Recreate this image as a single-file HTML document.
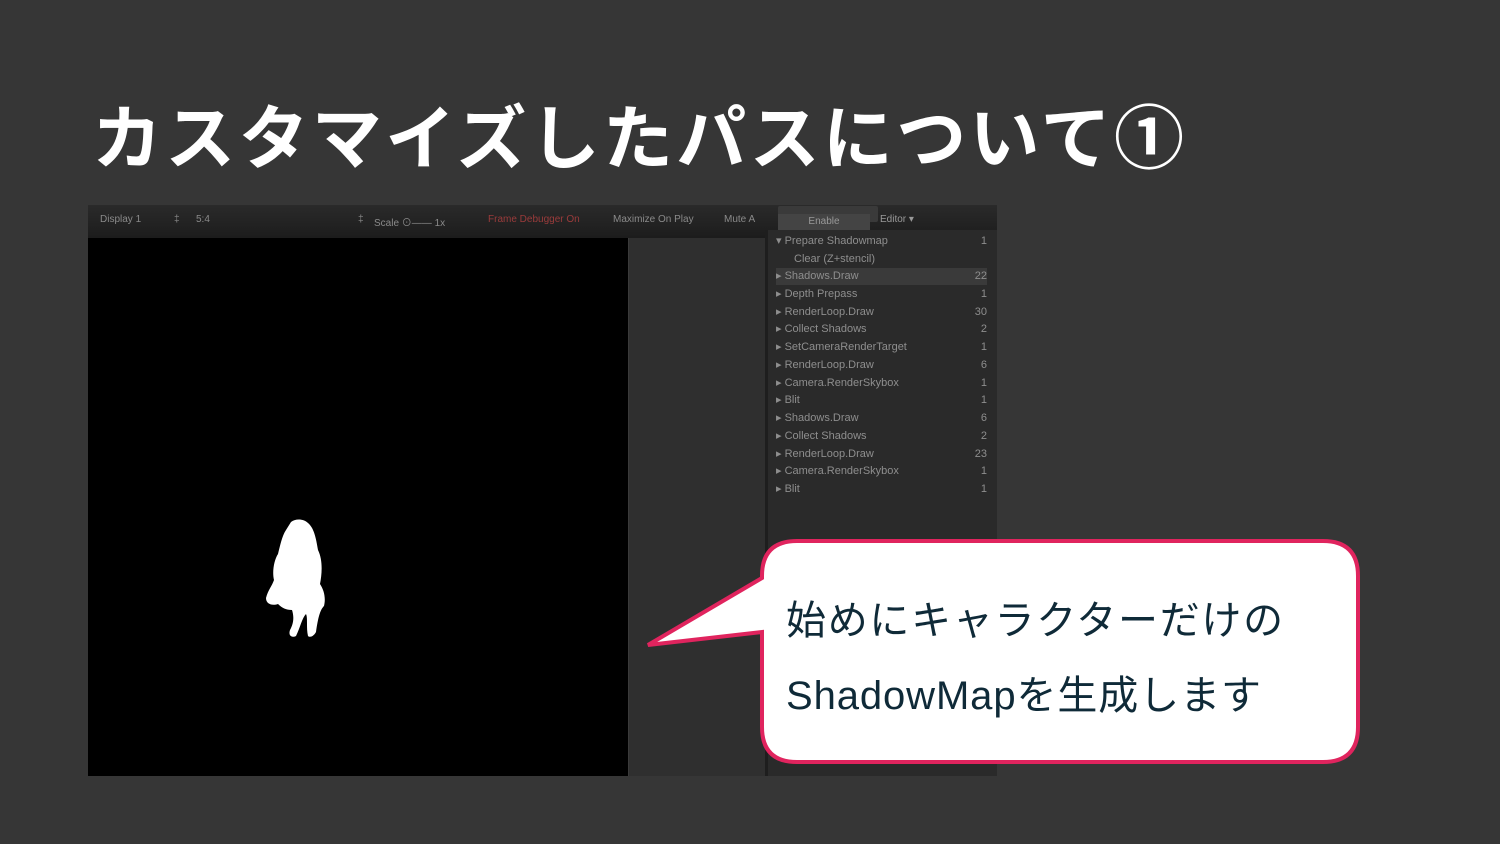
<!DOCTYPE html>
<html><head><meta charset="utf-8"><style>
html,body{margin:0;padding:0;}
body{width:1500px;height:844px;background:#363636;position:relative;overflow:hidden;font-family:"Liberation Sans","Noto Sans CJK JP",sans-serif;}
.title{position:absolute;left:92px;top:86px;font-family:"Noto Sans CJK JP",sans-serif;font-weight:700;font-size:70px;letter-spacing:3.3px;color:#fff;white-space:nowrap;line-height:96px;}
.shot{position:absolute;left:88px;top:205px;width:909px;height:571px;background:#2e2e2e;overflow:hidden;}
.tb{position:absolute;left:0;top:0;width:909px;height:33px;background:linear-gradient(#2a2a2a,#222 60%,#1c1c1c);}
.tb span{position:absolute;top:9px;font-size:10px;color:#8a8a8a;white-space:nowrap;}
.game{position:absolute;left:0;top:33px;width:540px;height:538px;background:#000;}
.mid{position:absolute;left:540px;top:33px;width:137px;height:538px;background:#2f2f2f;border-left:1px solid #3a3a3a;}
.panel{position:absolute;left:677px;top:25px;width:229px;height:546px;background:#2a2a2a;border-left:3px solid #1e1e1e;}
.row{position:absolute;left:8px;width:211px;font-size:11px;color:#8e8e8e;white-space:nowrap;height:17px;line-height:17px;}
.row b{position:absolute;right:0;font-weight:normal;}
.bubble{position:absolute;left:0;top:0;}
.txt{position:absolute;left:786px;font-size:40px;color:#0f2a38;white-space:nowrap;font-family:"Liberation Sans","Noto Sans CJK JP",sans-serif;}
</style></head><body>
<div class="title">カスタマイズしたパスについて①</div>
<div class="shot">
 <div class="tb">
  <span style="left:12px">Display 1</span><span style="left:86px">‡</span><span style="left:108px">5:4</span>
  <span style="left:270px">‡</span><span style="left:286px">Scale ⊙—— 1x</span>
  <span style="left:400px;color:#9a3b3b">Frame Debugger On</span>
  <span style="left:525px">Maximize On Play</span><span style="left:636px">Mute A</span>
  <span style="left:690px;top:1px;width:100px;height:16px;background:#3a3a3a;border-radius:2px"></span>
  <span style="left:690px;top:9px;width:92px;height:16px;background:#444;text-align:center;line-height:16px;color:#999">Enable</span>
  <span style="left:792px;top:9px;color:#999">Editor ▾</span>
 </div>
 <div class="game">
  <svg width="540" height="538" style="position:absolute;left:0;top:0">
   <path fill="#fff" d="M203,284 C208,280 216,281 220,285 C226,290 228,300 230,312 C235,322 234,336 232,346 C236,352 238,360 236,368 C232,372 230,380 228,394 C226,398 222,400 220,398 C218,390 220,380 218,376 C214,380 212,390 208,398 C204,400 200,398 202,392 C206,385 206,378 204,372 C198,372 194,370 190,366 C184,368 178,366 178,360 C180,352 184,348 186,342 C184,334 186,322 190,316 C192,308 194,298 198,292 Z"/>
  </svg>
 </div>
 <div class="mid"></div>
 <div class="panel">
  <div class="row" style="top:3px">▾ Prepare Shadowmap<b>1</b></div>
  <div class="row" style="top:21px;left:26px;width:180px">Clear (Z+stencil)</div>
  <div class="row" style="top:38px;background:#3a3a3a">▸ Shadows.Draw<b>22</b></div>
  <div class="row" style="top:56px">▸ Depth Prepass<b>1</b></div>
  <div class="row" style="top:74px">▸ RenderLoop.Draw<b>30</b></div>
  <div class="row" style="top:91px">▸ Collect Shadows<b>2</b></div>
  <div class="row" style="top:109px">▸ SetCameraRenderTarget<b>1</b></div>
  <div class="row" style="top:127px">▸ RenderLoop.Draw<b>6</b></div>
  <div class="row" style="top:145px">▸ Camera.RenderSkybox<b>1</b></div>
  <div class="row" style="top:162px">▸ Blit<b>1</b></div>
  <div class="row" style="top:180px">▸ Shadows.Draw<b>6</b></div>
  <div class="row" style="top:198px">▸ Collect Shadows<b>2</b></div>
  <div class="row" style="top:216px">▸ RenderLoop.Draw<b>23</b></div>
  <div class="row" style="top:233px">▸ Camera.RenderSkybox<b>1</b></div>
  <div class="row" style="top:251px">▸ Blit<b>1</b></div>
 </div>
</div>
<svg class="bubble" width="1500" height="844">
 <path d="M797,541 H1323 Q1358,541 1358,576 V727 Q1358,762 1323,762 H797 Q762,762 762,727 V632 L648,645 L762,578 V576 Q762,541 797,541 Z" fill="#fff" stroke="#e0245e" stroke-width="4" stroke-linejoin="miter"/>
</svg>
<div class="txt" style="top:588px;letter-spacing:1.7px">始めにキャラクターだけの</div>
<div class="txt" style="top:663px;letter-spacing:0.9px">ShadowMapを生成します</div>
</body></html>
